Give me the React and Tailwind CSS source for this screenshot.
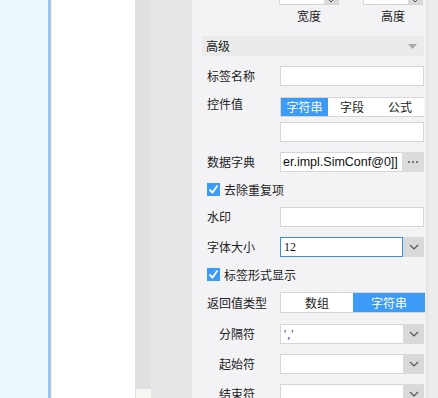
import React from 'react';

const cjk = { fontFamily: '"Noto Sans CJK SC", "Liberation Sans", sans-serif' };

const Chevron = () => (
  <svg width="10" height="6" viewBox="0 0 10 6" fill="none">
    <polyline points="1,1 5,5 9,1" stroke="#555" strokeWidth="1.2" />
  </svg>
);

const Check = () => (
  <span className="w-[13px] h-[13px] bg-[#3d9bf8] flex items-center justify-center shrink-0">
    <svg width="11" height="11" viewBox="0 0 11 11" fill="none">
      <polyline points="1.5,5.5 4.5,8.5 9.5,1.5" stroke="#fff" strokeWidth="1.8" />
    </svg>
  </span>
);

const Row = ({ label, children, className = '', sub = false }) => (
  <div className={`flex items-center ${className}`}>
    <div className={`${sub ? 'w-[61px] ml-[17px]' : 'w-[73px] ml-[5px]'} shrink-0 text-[12px] text-[#222]`}>{label}</div>
    <div className="flex-1 h-full flex">{children}</div>
  </div>
);

const Input = () => <div className="flex-1 h-full bg-white border border-[#d6d6d6]" />;

const Select = ({ value, focus = false }) => (
  <div className="flex-1 h-full flex">
    <div
      className={`flex-1 h-full bg-white border flex items-center pl-[3px] text-[12px] text-[#111] ${
        focus ? 'border-[#3c8cf0]' : 'border-[#d6d6d6] border-r-0'
      }`}
      style={{ fontFamily: '"Liberation Serif", serif' }}
    >
      {value}
    </div>
    <div className="w-[21px] h-full bg-[#d9d9d9] flex items-center justify-center">
      <Chevron />
    </div>
  </div>
);

const Segment = ({ items, active, widths }) => (
  <div className="flex-1 h-full flex bg-white border border-[#d6d6d6] border-r-0">
    {items.map((t, i) => (
      <div
        key={t}
        className={`h-full flex items-center justify-center text-[12px] ${
          i === active ? 'bg-[#3d9bf8] text-white' : 'text-[#222]'
        } ${widths[i]}`}
      >
        {t}
      </div>
    ))}
  </div>
);

const App = () => {
  return (
    <div className="w-[438px] h-[398px] flex overflow-hidden bg-white" style={cjk}>
      {/* left strip */}
      <div className="w-[48px] h-full bg-[#ebf6fd]" />
      <div className="w-[2px] h-full bg-[#92c6f6]" />
      <div className="w-[1px] h-full bg-[#c4c4c4]" />
      <div className="w-[1px] h-full bg-[#ececec]" />
      <div className="w-[83px] h-full bg-white" />
      <div className="w-[1px] h-full bg-[#e2e2da]" />
      <div className="w-[15px] h-full bg-[#e0e0e0] flex flex-col justify-end">
        <div className="h-[9px] bg-[#f6f6f2]" />
      </div>
      <div className="w-[41px] h-full bg-[#e6e6e6]" />

      {/* property panel */}
      <div className="w-[234px] h-full bg-[#f3f3f5] flex flex-col pl-[10px] pr-[2px]">
        {/* width / height spinners */}
        <div className="h-[20px] -mt-[15px] flex shrink-0">
          <div className="ml-[77px] w-[60px] h-full flex border border-[#d6d6d6] bg-white">
            <div className="flex-1" />
            <div className="w-[14px] bg-[#d9d9d9] flex items-end justify-center pb-[1px]">
              <svg width="6" height="4" viewBox="0 0 6 4"><polyline points="1,1 3,3 5,1" stroke="#555" fill="none" /></svg>
            </div>
          </div>
          <div className="ml-[24px] w-[60px] h-full flex border border-[#d6d6d6] bg-white">
            <div className="flex-1" />
            <div className="w-[14px] bg-[#d9d9d9] flex items-end justify-center pb-[1px]">
              <svg width="6" height="4" viewBox="0 0 6 4"><polyline points="1,1 3,3 5,1" stroke="#555" fill="none" /></svg>
            </div>
          </div>
        </div>
        <div className="h-[22px] flex items-center text-[12px] text-[#222] shrink-0">
          <span className="ml-[95px]">宽度</span>
          <span className="ml-[60px]">高度</span>
        </div>

        {/* header */}
        <div className="mt-[9px] h-[20px] bg-[#ebebeb] flex items-center justify-between pl-[4px] pr-[7px] text-[12px] text-[#222] shrink-0">
          <span>高级</span>
          <svg width="9" height="5" viewBox="0 0 9 5"><polygon points="0,0 9,0 4.5,5" fill="#aaa" /></svg>
        </div>

        <Row label="标签名称" className="mt-[10px] h-[20px] shrink-0">
          <Input />
        </Row>

        <div className="mt-[11px] h-[20px] flex shrink-0">
          <div className="w-[73px] ml-[5px] shrink-0 text-[12px] text-[#222] leading-none pt-[1px]">控件值</div>
          <Segment items={['字符串', '字段', '公式']} active={0} widths={['w-[47px]', 'w-[48px]', 'w-[48px]']} />
        </div>
        <div className="mt-[5px] h-[20px] flex shrink-0">
          <div className="w-[78px] shrink-0" />
          <Input />
        </div>

        <Row label="数据字典" className="mt-[10px] h-[20px] shrink-0">
          <div className="flex-1 h-full flex">
            <div
              className="flex-1 h-full bg-white border border-[#d6d6d6] border-r-0 flex items-center pl-[2px] text-[12.5px] text-[#111] overflow-hidden whitespace-nowrap"
              style={{ fontFamily: '"Liberation Sans", sans-serif' }}
            >
              er.impl.SimConf@0]]
            </div>
            <div className="w-[22px] h-full bg-[#dcdcdc] flex items-center justify-center gap-[2px]">
              <span className="w-[2px] h-[2px] bg-[#777]" />
              <span className="w-[2px] h-[2px] bg-[#777]" />
              <span className="w-[2px] h-[2px] bg-[#777]" />
            </div>
          </div>
        </Row>

        <div className="mt-[11px] h-[13px] flex items-center gap-[4px] ml-[5px] text-[12px] text-[#222] shrink-0">
          <Check />
          <span>去除重复项</span>
        </div>

        <Row label="水印" className="mt-[11px] h-[20px] shrink-0">
          <Input />
        </Row>

        <Row label="字体大小" className="mt-[10px] h-[20px] shrink-0">
          <Select value="12" focus />
        </Row>

        <div className="mt-[11px] h-[13px] flex items-center gap-[4px] ml-[5px] text-[12px] text-[#222] shrink-0">
          <Check />
          <span>标签形式显示</span>
        </div>

        <Row label="返回值类型" className="mt-[11px] h-[21px] shrink-0">
          <Segment items={['数组', '字符串']} active={1} widths={['w-[72px]', 'w-[72px]']} />
        </Row>

        <Row label="分隔符" sub className="mt-[11px] h-[20px] shrink-0">
          <Select value={<span className="text-[#3a3a9a] tracking-[1px]">','</span>} />
        </Row>
        <Row label="起始符" sub className="mt-[10px] h-[20px] shrink-0">
          <Select value="" />
        </Row>
        <Row label="结束符" sub className="mt-[10px] h-[20px] shrink-0">
          <Select value="" />
        </Row>
      </div>

      {/* right scrollbar */}
      <div className="w-[2px] h-full bg-[#e4e4e4]" />
      <div className="flex-1 h-full bg-[#ececec]" />
    </div>
  );
};

export default App;
